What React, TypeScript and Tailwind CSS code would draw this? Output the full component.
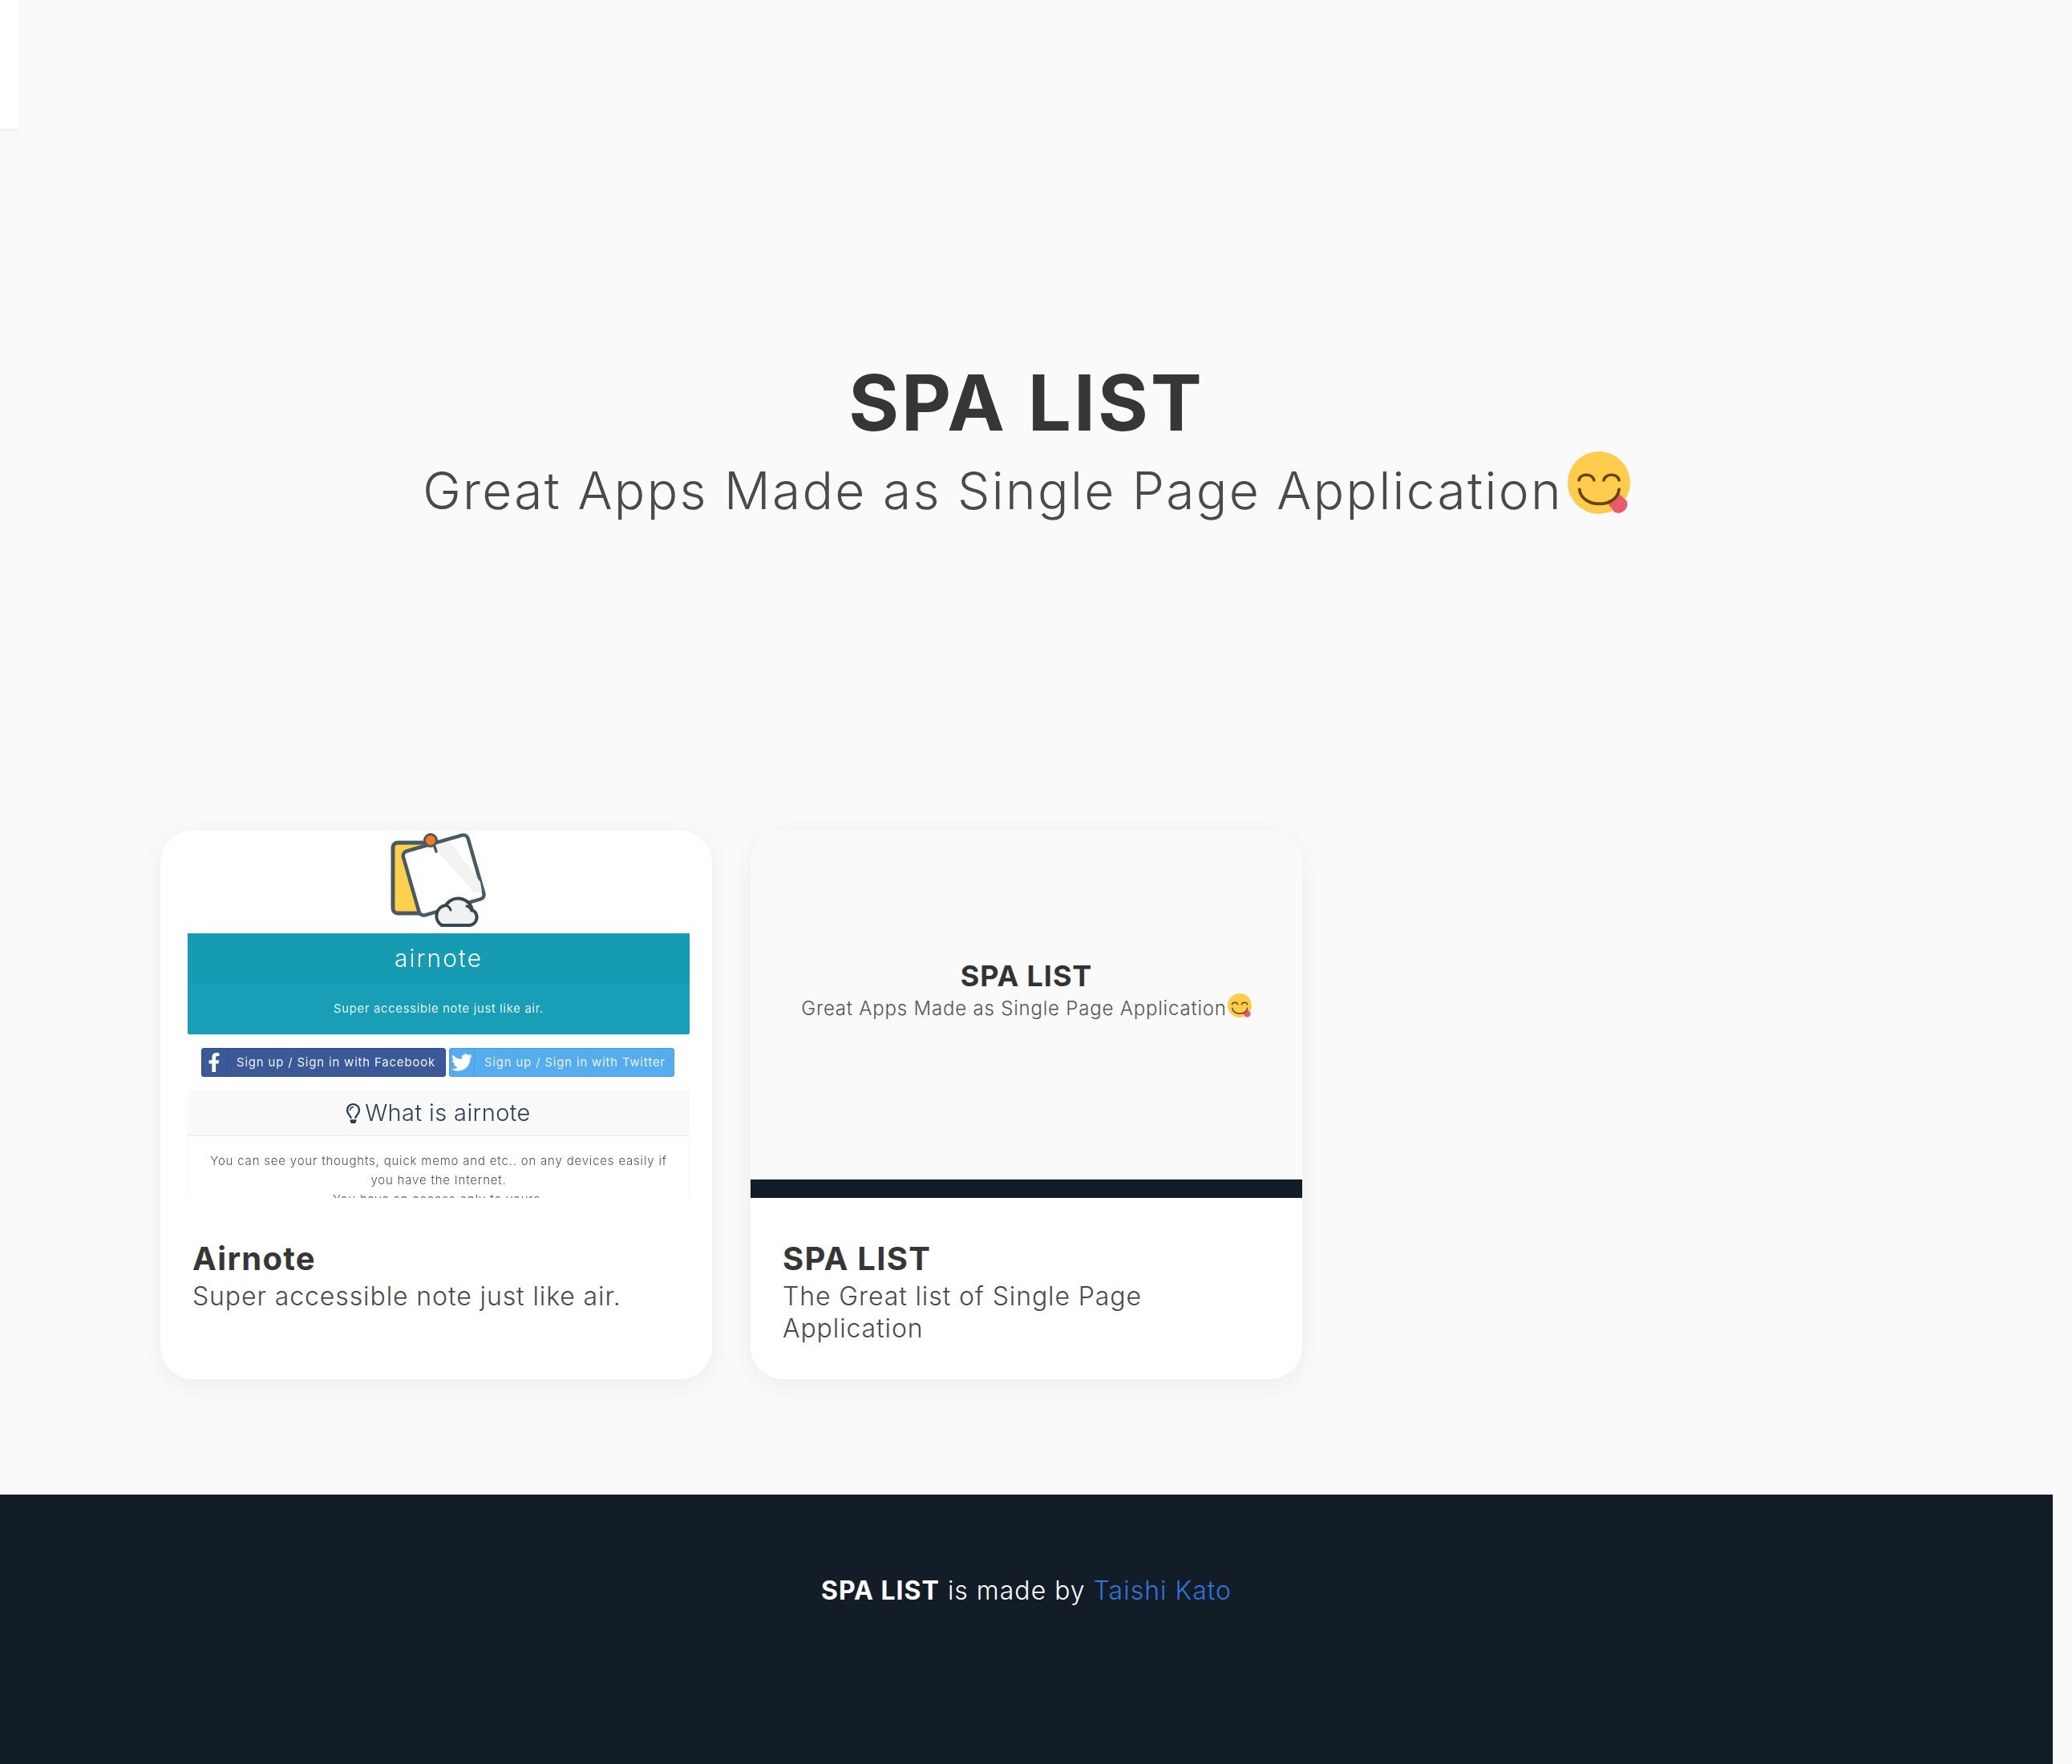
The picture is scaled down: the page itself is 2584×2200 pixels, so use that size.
import { FaFacebookF, FaRegLightbulb, FaTwitter } from "react-icons/fa";

const font = "font-['Inter','Noto_Sans',sans-serif]";

function Yum({ className }: { className: string }) {
  return (
    <svg viewBox="0 0 36 36" className={className}>
      <circle cx="18" cy="18" r="18" fill="#FFCC4D" />
      <path d="M25 31 L31 25 L33 29 L29 35 Z" fill="#FFAC33" />
      <path d="M23.5 30.5 L29.5 24.5 L34 28.5 A5.2 5.2 0 0 1 27 35 Z" fill="#EA596E" />
      <path
        d="M6.5 16.5 C7.5 12.5 14 12.5 15.2 16.5 M20.8 16.5 C22 12.5 28.5 12.5 29.6 16.5 M6.8 21.8 C8 33 28.5 33 29.6 21.8"
        fill="none"
        stroke="#664500"
        strokeWidth="1.7"
        strokeLinecap="round"
      />
    </svg>
  );
}

function AirnoteLogo() {
  return (
    <svg viewBox="26 16 122 122" className="h-[122px] w-[122px]">
      <path d="M72 31 H36 a6 6 0 0 0 -6 6 V113 a6 6 0 0 0 6 6 H64 Z" fill="#FFD04F" stroke="#4A5A63" strokeWidth="5" strokeLinejoin="round" />
      <rect x="51" y="30" width="84" height="83" rx="6" transform="rotate(-16 93 71)" fill="#fff" stroke="#4A5A63" strokeWidth="4.5" />
      <path d="M80 35 L101 29 L139 80 L141 92 L132 94 Z" fill="#F3F3F3" />
      <path d="M80 30 L84 42" stroke="#4A5A63" strokeWidth="3.5" strokeLinecap="round" />
      <circle cx="77" cy="28" r="7.500" fill="#F47B20" stroke="#4A5A63" strokeWidth="3" />
      <path
        d="M91 134 H124 a10 10 0 0 0 5 -19 a18 18 0 0 0 -33 -6 a13.500 13.500 0 0 0 -5 25 Z"
        fill="#F1F1F1"
        stroke="#37474F"
        strokeWidth="4"
        strokeLinejoin="round"
      />
      <path d="M96 109 C99 110 101 112 102 115 M122 110 C125 111 127 113 128 116" fill="none" stroke="#37474F" strokeWidth="3" strokeLinecap="round" />
    </svg>
  );
}

function AirnoteShot() {
  return (
    <div className="h-[458px] overflow-hidden bg-white pl-[34px] pr-[28px] blur-[0.4px]">
      <div className="flex h-[128px] justify-center">
        <AirnoteLogo />
      </div>
      <div className="h-[126px] rounded-[2px] bg-[#189fb7] text-center text-white">
        <div className="h-[63px] border-b border-[#1398b0] bg-[#159cb3] pt-[11px] text-[30px] font-light leading-[40px] tracking-[2px]">airnote</div>
        <div className="pt-[20px] text-[15px] leading-[22px] tracking-[0.6px] text-[#e3f5f8]">Super accessible note just like air.</div>
      </div>
      <div className="mt-[17px] flex gap-[4px] pl-[17px] pr-[18px] text-[15px] tracking-[0.8px] text-[#eef3fa]">
        <div className="flex h-[36px] w-[305px] items-center rounded-[3px] border border-[#2f4a8a] bg-[#3b5998]">
          <div className="flex h-full w-[31px] items-center justify-center border-r border-[#34508b] text-[24px] text-white">
            <FaFacebookF />
          </div>
          <span className="ml-[12px] whitespace-nowrap">Sign up / Sign in with Facebook</span>
        </div>
        <div className="flex h-[36px] w-[281px] items-center rounded-[3px] border border-[#4a9be0] bg-[#55acee]">
          <div className="flex h-full w-[31px] items-center justify-center border-r border-[#4ca0e2] text-[26px] text-white">
            <FaTwitter />
          </div>
          <span className="ml-[12px] whitespace-nowrap">Sign up / Sign in with Twitter</span>
        </div>
      </div>
      <div className="mt-[16px] flex h-[58px] items-center justify-center gap-[2px] rounded-t-[3px] border-b-2 border-[#efefef] bg-[#f9f9f9] pr-[4px] pt-[2px] text-[29px] font-light tracking-[0.4px] text-[#2c3e50]">
        <FaRegLightbulb className="text-[25px]" />
        <span>What is airnote</span>
      </div>
      <div className="border-x border-[#f8f8f8] px-[26px] pt-[19px] text-center text-[15px] font-light leading-[24px] tracking-[0.8px] text-[#555]">
        You can see your thoughts, quick memo and etc.. on any devices easily if
        <br />
        you have the Internet.
        <br />
        You have an access only to yours.
      </div>
    </div>
  );
}

function SpaShot() {
  return (
    <div className="flex h-[458px] flex-col bg-[#fafafa]">
      <div className="flex-1 pt-[159px] text-center">
        <div className="text-[36px] font-bold leading-[44px] tracking-[0.9px] text-[#333]">SPA LIST</div>
        <div className="flex justify-center text-[24px] font-light leading-[38px] tracking-[0.8px] text-[#555]">
          <span>Great Apps Made as Single Page Application</span>
          <Yum className="ml-[1px] h-[30px] w-[30px]" />
        </div>
      </div>
      <div className="h-[23px] bg-[#121d27]" />
    </div>
  );
}

function Card({ shot, title, children }: { shot: React.ReactNode; title: string; children: React.ReactNode }) {
  return (
    <div className="h-[684px] w-[688px] overflow-hidden rounded-[40px] bg-white shadow-[0_8px_32px_rgba(0,0,0,0.06)]">
      {shot}
      <div className="px-[40px] pt-[52px]">
        <div className="text-[40px] font-bold leading-[48px] tracking-[1.3px] text-[#363636]">{title}</div>
        <div className="pt-[3px] text-[32px] font-light leading-[40px] tracking-[0.9px] text-[#4a4a4a]">{children}</div>
      </div>
    </div>
  );
}

export default function App() {
  return (
    <div className={`relative min-h-[2200px] bg-[#fafafa] ${font}`}>
      {/* collapsed side menu */}
      <div className="absolute left-0 top-0 h-[160px] w-[24px] bg-white shadow-[0_4px_0_#f5f5f5]" />
      <div className="w-[2560px]">
        <div className="h-[1036px] pt-[442px] text-center">
          <h1 className="text-[96px] font-bold leading-[120px] tracking-[3px] text-[#363636]">SPA LIST</h1>
          <div className="flex justify-center pt-[6px] text-[64px] font-light leading-[88px] tracking-[2.3px] text-[#4a4a4a]">
            <span>Great Apps Made as Single Page Application</span>
            <Yum className="ml-[6px] mt-[-5px] h-[78px] w-[78px]" />
          </div>
        </div>
        <div className="flex h-[828px] gap-[48px] pl-[200px]">
          <Card shot={<AirnoteShot />} title="Airnote">
            Super accessible note just like air.
          </Card>
          <Card shot={<SpaShot />} title="SPA LIST">
            The Great list of Single Page Application
          </Card>
        </div>
        <footer className="h-[336px] bg-[#121d27] pt-[96px] text-center text-[32px] font-light leading-[48px] tracking-[1px] text-white">
          <strong className="font-bold">SPA LIST</strong> is made by <a className="text-[#3273dc]">Taishi Kato</a>
        </footer>
      </div>
    </div>
  );
}
